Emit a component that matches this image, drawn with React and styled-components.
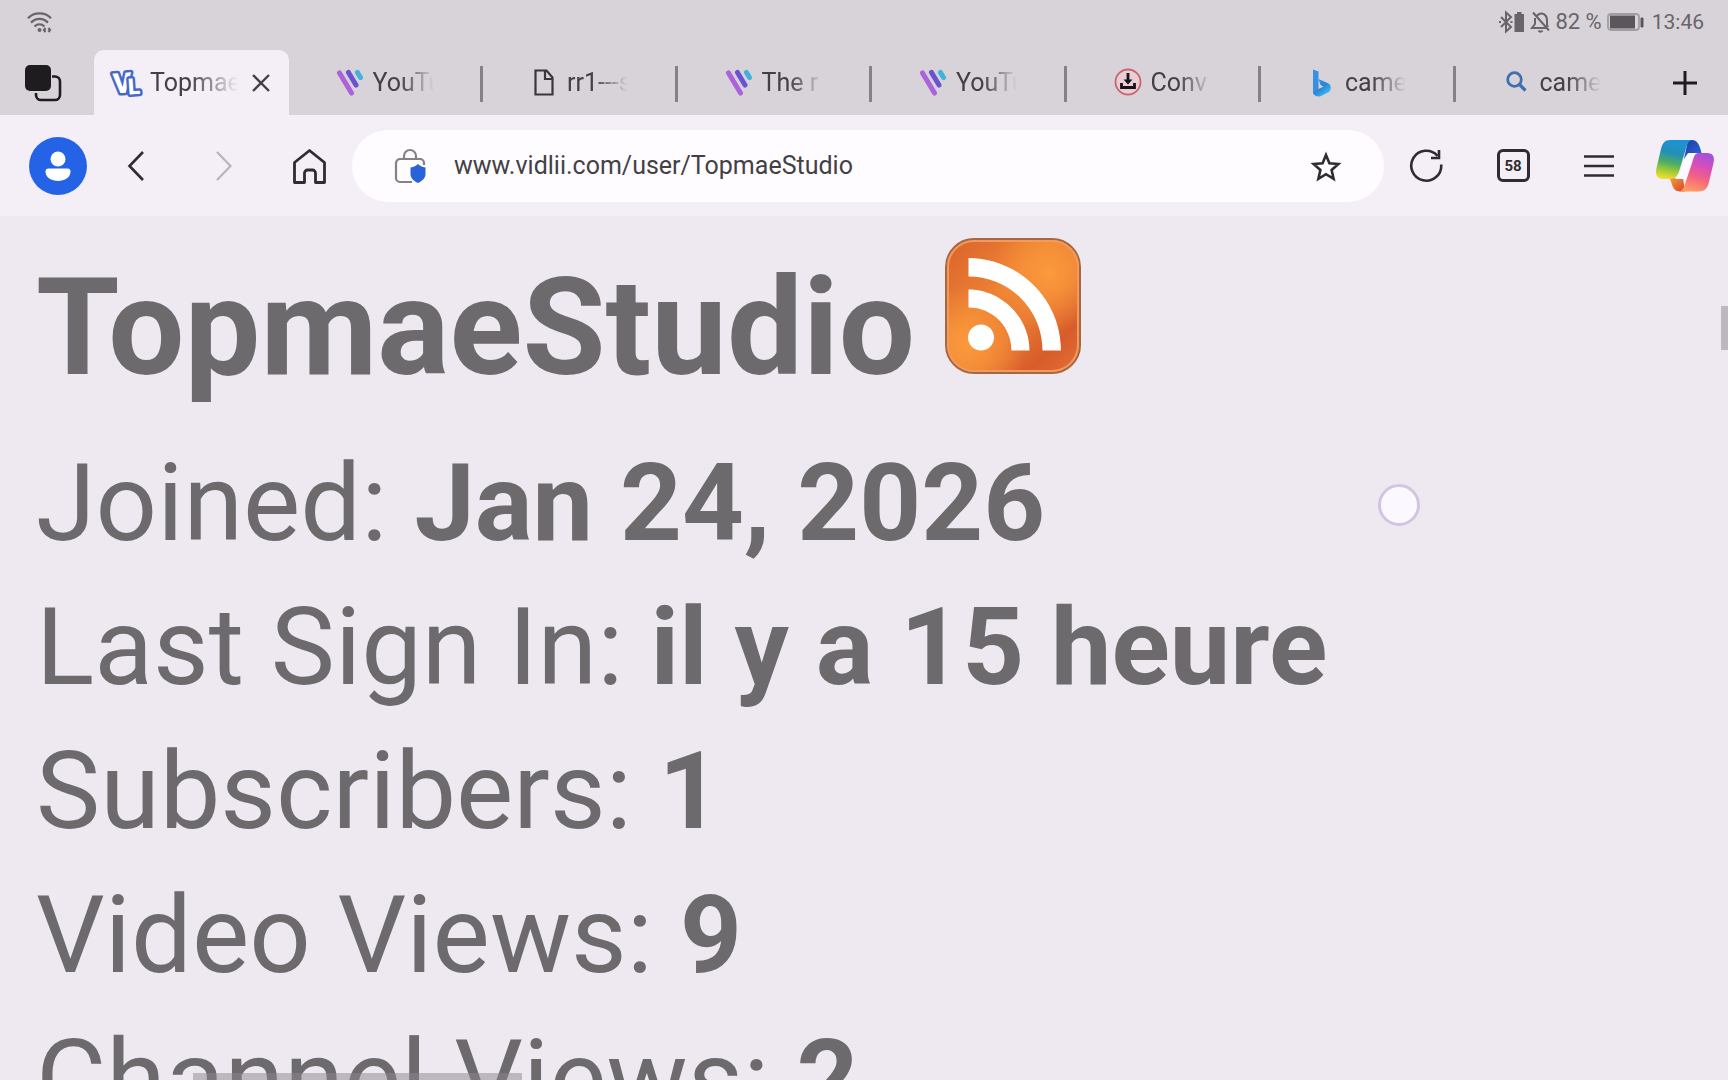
import React from "react";
import styled, { createGlobalStyle, css } from "styled-components";

const GlobalStyle = createGlobalStyle`
  *, *::before, *::after { box-sizing: border-box; }
  body {
    margin: 0;
    background: #eee9f0;
    font-family: Roboto, "Noto Sans", sans-serif;
  }
`;

const Browser = styled.div`
  height: 100vh;
  display: flex;
  flex-direction: column;
  overflow: hidden;
  background: #eee9f0;
`;

const StatusBar = styled.header`
  display: flex;
  align-items: center;
  justify-content: space-between;
  height: 44px;
  padding: 0 24px;
  background: #d8d3d9;
  color: #68646a;
  font-size: 22px;
  line-height: 24px;
`;

const StatusGroup = styled.div`
  display: flex;
  align-items: center;
  gap: 4px;
`;

const Clock = styled.time`
  margin-left: 4px;
  font-size: 21px;
`;

const TabStrip = styled.nav`
  display: flex;
  height: 71px;
  padding-top: 6px;
  background: #d8d3d9;
  color: #444046;
`;

const Tabs = styled.div`
  flex: 1;
  min-width: 0;
  display: grid;
  grid-template-columns: repeat(8, minmax(0, 1fr));
`;

const StripButton = styled.button`
  flex: none;
  display: flex;
  align-items: center;
  justify-content: center;
  width: ${(p) => p.$width}px;
  padding: 0 8px 0 0;
  border: 0;
  background: none;
  color: #1f1c20;
`;

const Tab = styled.div`
  display: flex;
  align-items: center;
  padding: 0 18px 0 46px;
  ${(p) =>
    p.$divided &&
    css`
      background: linear-gradient(#858187, #858187) right 16px / 3px 36px no-repeat;
    `}
  ${(p) =>
    p.$active &&
    css`
      padding: 0 18px;
      border-radius: 10px 10px 0 0;
      background: #f4eff7;
    `}
`;

const TabLabel = styled.button`
  display: flex;
  align-items: center;
  gap: 8px;
  width: ${(p) => (p.$active ? 128 : 100)}px;
  min-width: 0;
  padding: 0;
  border: 0;
  background: none;
  color: inherit;
  font: 25px/32px Roboto, sans-serif;
  white-space: nowrap;
  text-align: left;
`;

const TabTitle = styled.span`
  flex: 1;
  min-width: 0;
  mask-image: linear-gradient(to right, #000 44%, transparent 98%);
`;

const CloseButton = styled.button`
  display: flex;
  margin-left: auto;
  padding: 0;
  border: 0;
  background: none;
  color: #444046;
`;

const Toolbar = styled.div`
  display: flex;
  align-items: center;
  height: 101px;
  padding-left: 16px;
  background: #f4eff7;
  color: #2f2b31;
`;

const ToolButton = styled.button`
  flex: none;
  display: flex;
  align-items: center;
  justify-content: center;
  width: ${(p) => p.$width || 86}px;
  height: 72px;
  padding: 0;
  border: 0;
  background: none;
  color: ${(p) => (p.disabled ? "#b9b4bb" : "#2f2b31")};
`;

const AddressBar = styled.form`
  flex: 1;
  min-width: 0;
  display: flex;
  align-items: center;
  gap: 28px;
  height: 72px;
  padding: 0 42px;
  border-radius: 36px;
  background: #fefcff;
`;

const AddressInput = styled.input`
  flex: 1;
  min-width: 0;
  padding: 0;
  border: 0;
  outline: 0;
  background: none;
  color: #444046;
  font: 25px/32px Roboto, sans-serif;
`;

const IconButton = styled.button`
  display: flex;
  padding: 0;
  border: 0;
  background: none;
  color: #2f2b31;
`;

const TabCount = styled.span`
  display: flex;
  align-items: center;
  justify-content: center;
  width: 33px;
  height: 33px;
  border: 3px solid #2f2b31;
  border-radius: 6px;
  font: 700 15px/20px Roboto, sans-serif;
`;

const Page = styled.main`
  position: relative;
  flex: 1;
  min-height: 0;
  overflow: hidden;
  padding: 22px 36px 0;
  color: #6d6a6e;
`;

const ChannelHeading = styled.h1`
  display: flex;
  align-items: baseline;
  gap: 30px;
  margin: 0 0 23px;
  font-size: 135px;
  line-height: 160px;
  font-weight: 700;
`;

const FeedLink = styled.a`
  display: block;
  font-size: 0;
  line-height: 0;
`;

const Facts = styled.dl`
  margin: 0;
  font-size: 108px;
  line-height: 144px;
`;

const Fact = styled.div`
  display: flex;
  gap: 27px;
  white-space: nowrap;
`;

const FactName = styled.dt``;

const FactValue = styled.dd`
  margin: 0;
  font-weight: 700;
`;

const ScrollThumb = styled.div`
  position: absolute;
  background: rgba(140, 134, 142, 0.5);
  ${(p) =>
    p.$vertical
      ? css`top: 90px; right: 0; width: 7px; height: 44px;`
      : css`left: 193px; bottom: 0; width: 329px; height: 7px;`}
`;

const TouchPoint = styled.div`
  position: absolute;
  top: 268px;
  left: 1378px;
  width: 42px;
  height: 42px;
  border: 3px solid #d0c6e2;
  border-radius: 50%;
  background: #fcf8ff;
`;

const WifiIcon = () => (
  <svg width="30" height="24" viewBox="0 0 30 24" fill="none" stroke="currentColor" strokeWidth="2.2" aria-label="Wi-Fi">
    <path d="M4 8.2C10 1.8 21 1.8 27 8.2M7 12.6c5-5 12-5 17 0M10.500 16.500c3-2.800 7-2.800 10 0" />
    <circle cx="15.500" cy="20" r="2" fill="currentColor" stroke="none" />
    <path d="M21.500 18l-1.500 2 1.500 2M24.500 18l1.500 2-1.500 2" />
  </svg>
);

const BluetoothIcon = () => (
  <svg width="27" height="24" viewBox="0 0 27 24" fill="none" stroke="currentColor" strokeWidth="2" aria-label="Bluetooth">
    <path d="M3 7l10 10-5 4.500V2.500L13 7 3 17M1 12h2M12.500 12h2" />
    <path d="M16.500 4H19V2h4.500v2H26v18h-9.500z" fill="currentColor" stroke="none" />
  </svg>
);

const MutedBellIcon = () => (
  <svg width="22" height="24" viewBox="0 0 22 24" fill="none" stroke="currentColor" strokeWidth="2" aria-label="Notifications off">
    <path d="M4 2.500l16 18M8 5.500C13 1 18 5 18 10v5l1 2M6 8v6l-3 4h14M9.500 20.500c1 1.500 3 1.500 4 0" />
  </svg>
);

const BatteryIcon = () => (
  <svg width="38" height="22" viewBox="0 0 38 22" aria-label="Battery">
    <rect x="2" y="3" width="31" height="16" rx="3" fill="none" stroke="#a19da3" strokeWidth="1.800" />
    <rect x="4" y="4.500" width="25" height="13" fill="#5a565c" />
    <path d="M35 7h2v9h-2z" fill="#5a565c" stroke="#5a565c" />
  </svg>
);

const StackIcon = () => (
  <svg width="38" height="38" viewBox="0 0 38 38" aria-hidden="true">
    <path d="M28 12.500h3a5 5 0 0 1 5 5V31a5 5 0 0 1-5 5H17a5 5 0 0 1-5-5v-2" fill="none" stroke="#1f1c20" strokeWidth="2.600" />
    <rect x="1" y="1" width="26" height="26" rx="5" fill="#1f1c20" />
  </svg>
);

const VidliiIcon = () => (
  <svg
    width="30"
    height="30"
    viewBox="0 0 30 30"
    overflow="visible"
    aria-hidden="true"
    fontFamily="Roboto"
    fontWeight="900"
    fill="#fff"
    stroke="#4468c4"
    strokeWidth="5"
    strokeLinejoin="round"
    paintOrder="stroke"
  >
    <text x="1" y="25" fontSize="28" transform="rotate(-4 10 15)">V</text>
    <text x="16" y="26" fontSize="22" transform="rotate(-4 22 18)">L</text>
  </svg>
);

const WaveIcon = () => (
  <svg width="30" height="30" viewBox="0 0 30 30" fill="none" strokeWidth="5" strokeLinecap="round" aria-hidden="true">
    <path d="M4.500 5l12 20" stroke="#ac62d8" />
    <path d="M13.500 4.500l7.500 12.500" stroke="#6a52d0" />
    <path d="M22.500 4.500l3 5" stroke="#3fb3da" />
  </svg>
);

const FileIcon = () => (
  <svg width="30" height="30" viewBox="0 0 30 30" fill="none" stroke="#3a363c" strokeWidth="2.200" aria-hidden="true">
    <path d="M6.500 2.500h11l6 7v17h-17zM16 3v8h7.500" />
  </svg>
);

const DownloadIcon = () => (
  <svg width="30" height="30" viewBox="0 0 30 30" fill="none" aria-hidden="true">
    <circle cx="15" cy="14" r="12.500" fill="#e8cfd4" stroke="#cc6470" strokeWidth="1.800" />
    <path d="M15 5v8M8.500 15v4.500h13V15" stroke="#17131a" strokeWidth="2.800" />
    <path d="M10.500 11.500h9L15 16.500z" fill="#17131a" />
  </svg>
);

const BingIcon = () => (
  <svg width="30" height="30" viewBox="0 0 30 30" aria-hidden="true">
    <defs>
      <linearGradient id="bing" x1="0" y1="0" x2="0.800" y2="1">
        <stop offset="0" stopColor="#3f9fe6" />
        <stop offset="0.500" stopColor="#2582d8" />
        <stop offset="1" stopColor="#43c9ee" />
      </linearGradient>
    </defs>
    <path d="M6 1.500l5.500 2v18l-5.500 4z" fill="#3a8fdf" />
    <path d="M6 25l5.500-4 5-2.500-3-1.500-2-6 10 4.500c3 2 3 6 .5 8.500L14 28c-3 1.500-7 0-8-3z" fill="url(#bing)" />
  </svg>
);

const SearchIcon = () => (
  <svg width="30" height="30" viewBox="0 0 30 30" fill="none" stroke="#3e6fb0" strokeWidth="2.800" aria-hidden="true">
    <circle cx="12.500" cy="11.500" r="6.800" />
    <path d="M17.500 16.500l6 6" strokeWidth="3.200" />
  </svg>
);

const CloseIcon = () => (
  <svg width="20" height="20" viewBox="0 0 20 20" stroke="currentColor" strokeWidth="2.400" aria-hidden="true">
    <path d="M2 2l16 16M18 2L2 18" />
  </svg>
);

const PlusIcon = () => (
  <svg width="26" height="26" viewBox="0 0 26 26" stroke="currentColor" strokeWidth="3" aria-hidden="true">
    <path d="M13 1v24M1 13h24" />
  </svg>
);

const AvatarIcon = () => (
  <svg width="58" height="58" viewBox="0 0 58 58" aria-hidden="true">
    <circle cx="29" cy="29" r="29" fill="#2563e6" />
    <circle cx="29" cy="22" r="7.500" fill="#fff" />
    <path d="M19.500 31.500h19a3 3 0 0 1 3 3c0 6-6 9.500-12.500 9.500s-12.500-3.500-12.500-9.500a3 3 0 0 1 3-3z" fill="#fff" />
  </svg>
);

const BackIcon = () => (
  <svg width="36" height="36" viewBox="0 0 36 36" fill="none" stroke="currentColor" strokeWidth="2.600" aria-hidden="true">
    <path d="M19 4L5.500 18 19 32" />
  </svg>
);

const ForwardIcon = () => (
  <svg width="36" height="36" viewBox="0 0 36 36" fill="none" stroke="currentColor" strokeWidth="2.200" aria-hidden="true">
    <path d="M9 4l13.500 14L9 32" />
  </svg>
);

const HomeIcon = () => (
  <svg width="36" height="36" viewBox="0 0 36 36" fill="none" stroke="currentColor" strokeWidth="2.800" strokeLinejoin="round" aria-hidden="true">
    <path d="M2.500 34.500V14.500L17.500 2.500l15 12v20h-9V25a3 3 0 0 0-3-3h-5a3 3 0 0 0-3 3v9.500z" />
  </svg>
);

const SiteSafetyIcon = () => (
  <svg width="32" height="36" viewBox="0 0 32 36" fill="none" aria-hidden="true">
    <path d="M10 11V8a6 6 0 0 1 12 0v3M30 17v-2a4 4 0 0 0-4-4H6a4 4 0 0 0-4 4v15a4 4 0 0 0 4 4h12" stroke="#858187" strokeWidth="2.200" />
    <path d="M24 16c2 2 4 3 7.500 3.500v6.500c0 4-3 7-7.500 9-4.500-2-7.500-5-7.500-9v-6.500c3.500-.5 5.500-1.500 7.500-3.500z" fill="#2a62d8" />
  </svg>
);

const StarIcon = () => (
  <svg width="32" height="32" viewBox="0 0 32 32" fill="none" stroke="currentColor" strokeWidth="2.600" aria-hidden="true">
    <path d="M16 5l3.400 8.200 9 .8-6.800 6 2 8.800L16 24.200l-7.600 4.600 2-8.800-6.800-6 9-.8z" />
  </svg>
);

const ReloadIcon = () => (
  <svg width="36" height="36" viewBox="0 0 36 36" fill="none" stroke="currentColor" strokeWidth="2.600" aria-hidden="true">
    <path d="M32.200 16.500A15 15 0 1 1 28.500 7.800" />
    <path d="M30 2v8h-8" />
  </svg>
);

const MenuIcon = () => (
  <svg width="32" height="32" viewBox="0 0 32 32" stroke="currentColor" strokeWidth="2.600" aria-hidden="true">
    <path d="M1 6.500h30M1 16h30M1 25.500h30" />
  </svg>
);

const CopilotIcon = () => (
  <svg width="60" height="54" viewBox="0 0 60 54" aria-hidden="true">
    <defs>
      <linearGradient id="cpLeft" x1="0.550" y1="0" x2="0.350" y2="1">
        <stop offset="0" stopColor="#1c93d6" />
        <stop offset="0.350" stopColor="#2490b4" />
        <stop offset="0.600" stopColor="#4fae62" />
        <stop offset="0.850" stopColor="#b5d02e" />
        <stop offset="1" stopColor="#f0dc3a" />
      </linearGradient>
      <linearGradient id="cpRight" x1="0.700" y1="0" x2="0.400" y2="1">
        <stop offset="0" stopColor="#a44fdc" />
        <stop offset="0.350" stopColor="#d94fb4" />
        <stop offset="0.650" stopColor="#f5647f" />
        <stop offset="1" stopColor="#ff9a62" />
      </linearGradient>
      <linearGradient id="cpTop" x1="0" y1="0" x2="1" y2="1">
        <stop offset="0" stopColor="#1c3f98" />
        <stop offset="1" stopColor="#2b66e6" />
      </linearGradient>
      <linearGradient id="cpBottom" x1="0" y1="0" x2="1" y2="1">
        <stop offset="0" stopColor="#f2a035" />
        <stop offset="1" stopColor="#d9432c" />
      </linearGradient>
    </defs>
    <path d="M33 1h4c5 0 7.500 4 9.500 13H33l-4 6z" fill="url(#cpTop)" />
    <path d="M14 39h14l2 13.500h-5c-5 0-6.500-3-8-7-1-3-1.500-5-3-6.500z" fill="url(#cpBottom)" />
    <path d="M15 1h22c-4 1-5 5-6.500 10l-6 20c-1.500 5-4 9-9 9H8c-6 0-8-4-6.500-11L6 10C7.500 4 10 1 15 1z" fill="url(#cpLeft)" />
    <path d="M50 14H39c-5 0-8 2-9.500 7l-4 12c-1 3-3 6-6 7h15z" fill="#fdfaff" />
    <path d="M43 14h9c6 0 8 4 6.500 10L54 43c-1.500 6-4 9.500-10 9.500H24c4-1 5-4 6.500-9l7-21c1.500-5 2-7.500 5.500-8.500z" fill="url(#cpRight)" />
  </svg>
);

const FeedIcon = () => (
  <svg width="136" height="136" viewBox="0 0 136 136" aria-hidden="true">
    <defs>
      <linearGradient id="feed" x1="0" y1="0" x2="1" y2="1">
        <stop offset="0" stopColor="#d9622c" />
        <stop offset="0.400" stopColor="#ee8233" />
        <stop offset="0.600" stopColor="#e97832" />
        <stop offset="0.800" stopColor="#d75c2a" />
        <stop offset="1" stopColor="#e5703a" />
      </linearGradient>
      <radialGradient id="feedGlow" cx="0.780" cy="0.250" r="0.450">
        <stop offset="0" stopColor="#fb9a3c" />
        <stop offset="1" stopColor="#fb9a3c" stopOpacity="0" />
      </radialGradient>
      <radialGradient id="feedLow" cx="0.150" cy="0.800" r="0.450">
        <stop offset="0" stopColor="#fb9a3c" />
        <stop offset="1" stopColor="#fb9a3c" stopOpacity="0" />
      </radialGradient>
    </defs>
    <rect x="1" y="1" width="134" height="134" rx="28" fill="url(#feed)" stroke="#a8683f" strokeWidth="2" />
    <rect x="2" y="2" width="132" height="132" rx="27" fill="url(#feedGlow)" />
    <rect x="3" y="3" width="130" height="130" rx="26" fill="url(#feedLow)" stroke="#f09a60" strokeWidth="2" />
    <circle cx="36" cy="99.500" r="13" fill="#fff" />
    <path d="M23.500 51.500c33 0 61 28 61 61h-18c0-24-19-43-43-43zM23.500 20c50 0 92.500 41 92.500 92.500H97.500c0-41-33-74-74-74z" fill="#fff" />
  </svg>
);

const TABS = [
  { title: "Topmae", Icon: VidliiIcon, active: true },
  { title: "YouTu", Icon: WaveIcon },
  { title: "rr1---s", Icon: FileIcon },
  { title: "The r", Icon: WaveIcon },
  { title: "YouTu", Icon: WaveIcon },
  { title: "Conv", Icon: DownloadIcon },
  { title: "came", Icon: BingIcon },
  { title: "came", Icon: SearchIcon },
];

const FACTS = [
  ["Joined:", "Jan 24, 2026"],
  ["Last Sign In:", "il y a 15 heure"],
  ["Subscribers:", "1"],
  ["Video Views:", "9"],
  ["Channel Views:", "2"],
];

export default function App() {
  return (
    <Browser>
      <GlobalStyle />
      <StatusBar>
        <WifiIcon />
        <StatusGroup>
          <BluetoothIcon />
          <MutedBellIcon />
          <span>82 %</span>
          <BatteryIcon />
          <Clock>13:46</Clock>
        </StatusGroup>
      </StatusBar>
      <TabStrip aria-label="Tabs">
        <StripButton $width={94} aria-label="Tab groups">
          <StackIcon />
        </StripButton>
        <Tabs>
          {TABS.map(({ title, Icon, active }, i) => (
            <Tab key={i} $active={active} $divided={i > 0 && i < TABS.length - 1}>
              <TabLabel $active={active}>
                <Icon />
                <TabTitle>{title}</TabTitle>
              </TabLabel>
              {active && (
                <CloseButton aria-label="Close tab">
                  <CloseIcon />
                </CloseButton>
              )}
            </Tab>
          ))}
        </Tabs>
        <StripButton $width={78} aria-label="New tab">
          <PlusIcon />
        </StripButton>
      </TabStrip>
      <Toolbar>
        <ToolButton $width={84} aria-label="Profile"><AvatarIcon /></ToolButton>
        <ToolButton $width={84} aria-label="Back"><BackIcon /></ToolButton>
        <ToolButton $width={84} aria-label="Forward" disabled><ForwardIcon /></ToolButton>
        <ToolButton $width={84} aria-label="Home"><HomeIcon /></ToolButton>
        <AddressBar onSubmit={(e) => e.preventDefault()}>
          <IconButton type="button" aria-label="Site information"><SiteSafetyIcon /></IconButton>
          <AddressInput aria-label="Address" defaultValue="www.vidlii.com/user/TopmaeStudio" />
          <IconButton type="button" aria-label="Add to favourites"><StarIcon /></IconButton>
        </AddressBar>
        <ToolButton aria-label="Reload"><ReloadIcon /></ToolButton>
        <ToolButton aria-label="Open tabs"><TabCount>58</TabCount></ToolButton>
        <ToolButton aria-label="Menu"><MenuIcon /></ToolButton>
        <ToolButton aria-label="Copilot"><CopilotIcon /></ToolButton>
      </Toolbar>
      <Page>
        <ChannelHeading>
          TopmaeStudio
          <FeedLink href="#feed" aria-label="Channel feed"><FeedIcon /></FeedLink>
        </ChannelHeading>
        <Facts>
          {FACTS.map(([name, value]) => (
            <Fact key={name}>
              <FactName>{name}</FactName>
              <FactValue>{value}</FactValue>
            </Fact>
          ))}
        </Facts>
        <ScrollThumb $vertical />
        <ScrollThumb />
        <TouchPoint />
      </Page>
    </Browser>
  );
}
